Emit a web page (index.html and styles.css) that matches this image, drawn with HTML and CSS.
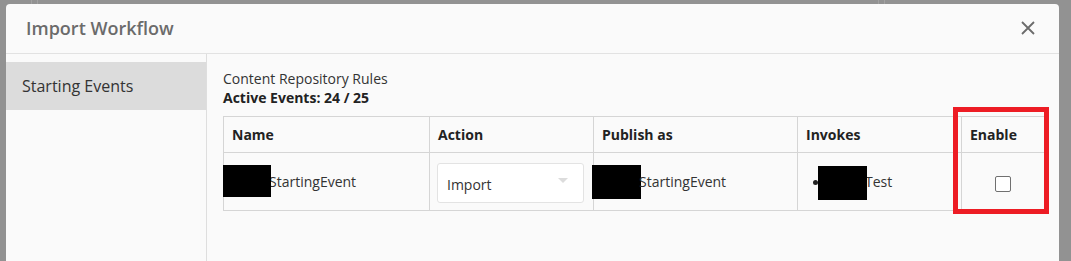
FILE: index.html
```html
<!DOCTYPE html>
<html>
<head>
<meta charset="utf-8">
<link rel="stylesheet" href="styles.css">
</head>
<body>
<div class="modal">
  <div class="modal-header">
    <div class="title">Import Workflow</div>
    <button class="close" aria-label="Close">
      <svg width="14" height="14" viewBox="0 0 14 14"><path d="M1 1 L13 13 M13 1 L1 13" stroke="#6b6b6b" stroke-width="1.8" fill="none"/></svg>
    </button>
  </div>
  <div class="modal-body">
    <nav class="sidebar">
      <div class="side-item">Starting Events</div>
    </nav>
    <section class="content">
      <div class="rules">Content Repository Rules</div>
      <div class="active">Active Events: 24 / 25</div>
      <div class="table-wrap">
        <table class="events">
          <colgroup>
            <col class="c-name"><col class="c-action"><col class="c-pub"><col class="c-inv"><col class="c-en">
          </colgroup>
          <thead>
            <tr><th>Name</th><th>Action</th><th>Publish as</th><th>Invokes</th><th>Enable</th></tr>
          </thead>
          <tbody>
            <tr>
              <td class="name-cell"><span class="redact r-name"></span><span class="after">StartingEvent</span></td>
              <td class="action-cell"><div class="select"><span>Import</span><span class="caret"></span></div></td>
              <td class="pub-cell"><span class="redact r-pub"></span><span class="after">StartingEvent</span></td>
              <td class="inv-cell"><ul class="inv-list"><li><span class="redact r-inv"></span><span class="after">Test</span></li></ul></td>
              <td class="en-cell"><span class="checkbox"></span></td>
            </tr>
          </tbody>
        </table>
        <div class="highlight"></div>
      </div>
    </section>
  </div>
</div>
</body>
</html>
```

FILE: styles.css
```css
html, body {
  margin: 0;
  padding: 0;
  height: 100%;
}
body {
  background-color: #929292;
  background-image:
    linear-gradient(to right, transparent 31px, #a2a2a2 31px, #a2a2a2 32px, transparent 32px, transparent 37px, #a2a2a2 37px, #a2a2a2 38px, transparent 38px),
    linear-gradient(to right, transparent 878px, #a2a2a2 878px, #a2a2a2 879px, transparent 879px, transparent 884px, #a2a2a2 884px, #a2a2a2 885px, transparent 885px);
  background-repeat: no-repeat;
  background-size: 100% 4px;
  font-family: "Open Sans", "Noto Sans", sans-serif;
  color: #333;
  overflow: hidden;
}
.modal {
  margin: 4px 0 0 6px;
  width: 1053px;
  height: calc(100vh - 4px);
  background: #fafafa;
  border-radius: 4px 4px 0 0;
  display: flex;
  flex-direction: column;
}
.modal-header {
  height: 49px;
  border-bottom: 1px solid #e2e2e2;
  display: flex;
  align-items: center;
  justify-content: space-between;
  padding: 0 24px 0 20px;
  box-sizing: content-box;
  flex-shrink: 0;
}
.title {
  font-size: 18px;
  font-weight: 600;
  color: #6b6b6b;
  margin-top: -1px;
}
.close {
  background: none;
  border: 0;
  padding: 0;
  width: 14px;
  height: 14px;
  display: flex;
  margin-top: -1px;
}
.modal-body {
  display: flex;
  flex: 1;
}
.sidebar {
  width: 200px;
  border-right: 1px solid #dedede;
  padding-top: 8px;
}
.side-item {
  height: 48px;
  background: #dcdcdc;
  display: flex;
  align-items: center;
  padding-left: 16px;
  font-size: 16px;
  color: #333;
}
.content {
  flex: 1;
  padding: 15px 15px 0 16px;
  font-size: 14px;
  line-height: 19px;
}
.rules {
  color: #333;
}
.active {
  font-weight: 700;
  color: #222;
}
.table-wrap {
  position: relative;
  margin-top: 9px;
  width: 821px;
}
.events {
  border-collapse: collapse;
  width: 821px;
  table-layout: fixed;
  font-size: 14px;
}
.c-name { width: 206px; }
.c-action { width: 164px; }
.c-pub { width: 204px; }
.c-inv { width: 164px; }
.c-en { width: 83px; }
.events th, .events td {
  border: 1px solid #d5d5d5;
  padding: 0 0 0 8px;
  text-align: left;
  white-space: nowrap;
}
.events th {
  height: 35px;
  font-weight: 700;
  color: #222;
}
.events td {
  height: 57px;
  color: #333;
}
.redact {
  display: inline-block;
  background: #000;
  vertical-align: middle;
}
.after {
  vertical-align: middle;
  margin-left: -2px;
}
.name-cell { padding-left: 0 !important; }
.r-name {
  width: 48px;
  height: 32px;
  margin-left: -1px;
  position: relative;
  top: -1px;
}
.action-cell { padding-left: 7px !important; }
.select {
  margin-top: 3px;
  border: 1px solid #e3e3e3;
  border-radius: 3px;
  background: #fff;
  display: flex;
  align-items: center;
  justify-content: space-between;
  padding: 0 15px 0 9px;
  box-sizing: border-box;
  width: 147px;
  height: 40px;
  color: #333;
}
.select span:first-child { margin-top: 2px; }
.caret {
  width: 0;
  height: 0;
  border-left: 5px solid transparent;
  border-right: 5px solid transparent;
  border-top: 5px solid #dcdcdc;
  margin-top: -6px;
}
.pub-cell { padding-left: 0 !important; }
.r-pub {
  width: 49px;
  height: 34px;
  margin-left: -2px;
}
.inv-cell { padding-left: 0 !important; }
.inv-list {
  margin: 0;
  padding: 0 0 0 15px;
  list-style: none;
}
.inv-list li {
  display: flex;
  align-items: center;
}
.inv-list li::before {
  content: "";
  width: 5px;
  height: 5px;
  border-radius: 50%;
  background: #222;
  margin-top: 1px;
}
.r-inv {
  width: 49px;
  height: 34px;
  margin-left: 0;
  position: relative;
  top: 1px;
}
.en-cell {
  text-align: center !important;
  padding: 0 !important;
}
.checkbox {
  display: inline-block;
  width: 14px;
  height: 14px;
  border: 1px solid #707070;
  border-radius: 2px;
  background: #fff;
  vertical-align: middle;
  margin-top: 2px;
}
.highlight {
  position: absolute;
  left: 730px;
  top: -9px;
  width: 96px;
  height: 107px;
  border: 5px solid #ed1c24;
  box-sizing: border-box;
  pointer-events: none;
}
```
